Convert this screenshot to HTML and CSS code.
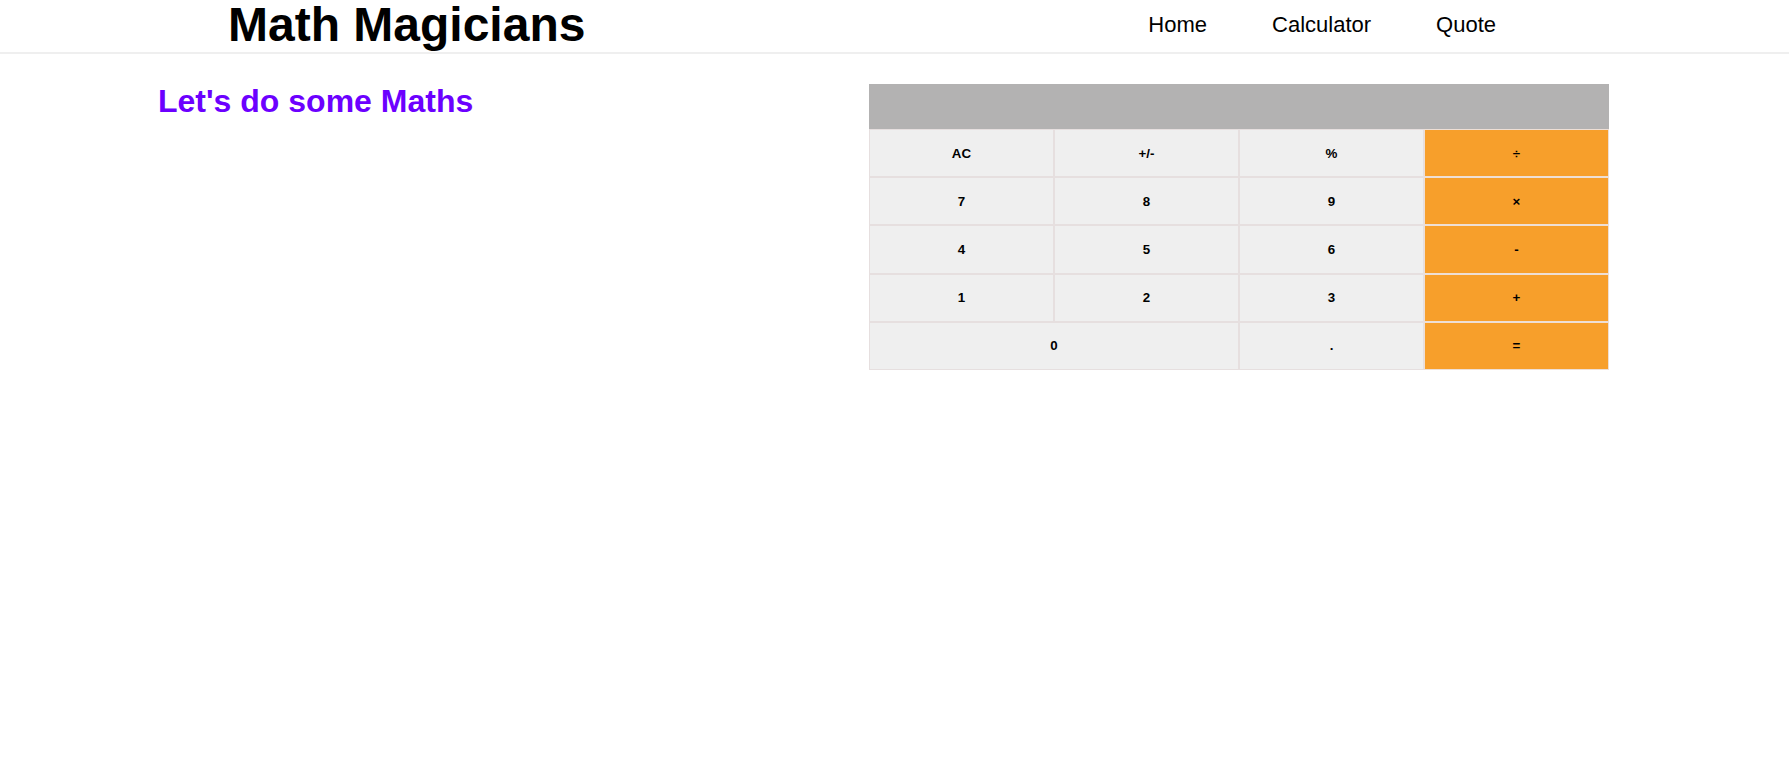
FILE: index.html
```html
<!DOCTYPE html>
<html lang="en">
<head>
<meta charset="utf-8">
<title>Math Magicians</title>
<link rel="stylesheet" href="styles.css">
</head>
<body>
<header class="header">
  <h1 class="logo">Math Magicians</h1>
  <nav class="nav">
    <a class="nav-link" href="#">Home</a>
    <a class="nav-link" href="#">Calculator</a>
    <a class="nav-link" href="#">Quote</a>
  </nav>
</header>
<main class="main">
  <h2 class="intro">Let's do some Maths</h2>
  <div class="calculator">
    <div class="display"></div>
    <div class="keys">
      <button class="key">AC</button>
      <button class="key">+/-</button>
      <button class="key">%</button>
      <button class="key op">÷</button>
      <button class="key">7</button>
      <button class="key">8</button>
      <button class="key">9</button>
      <button class="key op">×</button>
      <button class="key">4</button>
      <button class="key">5</button>
      <button class="key">6</button>
      <button class="key op">-</button>
      <button class="key">1</button>
      <button class="key">2</button>
      <button class="key">3</button>
      <button class="key op">+</button>
      <button class="key zero">0</button>
      <button class="key">.</button>
      <button class="key op">=</button>
    </div>
  </div>
</main>
</body>
</html>
```

FILE: styles.css
```css
* {
  box-sizing: border-box;
}

body {
  margin: 0;
  font-family: "Liberation Sans", Arial, sans-serif;
  background: #fff;
  color: #000;
}

.header {
  height: 54px;
  display: flex;
  align-items: center;
  justify-content: space-between;
  padding: 0 293px 0 228px;
  border-bottom: 2px solid #efefef;
}

.logo {
  margin: 0;
  font-size: 48px;
  font-weight: 700;
  line-height: 55px;
  margin-top: -4px;
}

.nav {
  display: flex;
  gap: 65px;
  margin-top: -2px;
}

.nav-link {
  font-size: 22px;
  color: #000;
  text-decoration: none;
}

.main {
  display: flex;
  align-items: flex-start;
  padding: 0 180px 0 158px;
}

.intro {
  margin: 29px 0 0;
  font-size: 32px;
  font-weight: 700;
  color: #6c00ff;
}

.calculator {
  margin-left: auto;
  margin-top: 30px;
  width: 740px;
}

.display {
  height: 45px;
  background: #b3b2b2;
}

.keys {
  display: grid;
  grid-template-columns: repeat(4, 1fr);
  grid-auto-rows: 48.2px;
}

.key {
  font-family: "Liberation Sans", Arial, sans-serif;
  font-size: 13.333px;
  font-weight: 700;
  color: #000;
  background: #efefef;
  border: 1px solid #e6dfdf;
  margin: 0;
  padding: 0;
}

.key.op {
  background: #f79f2b;
  border-color: #eedfd5;
}

.key.zero {
  grid-column: span 2;
}
```
